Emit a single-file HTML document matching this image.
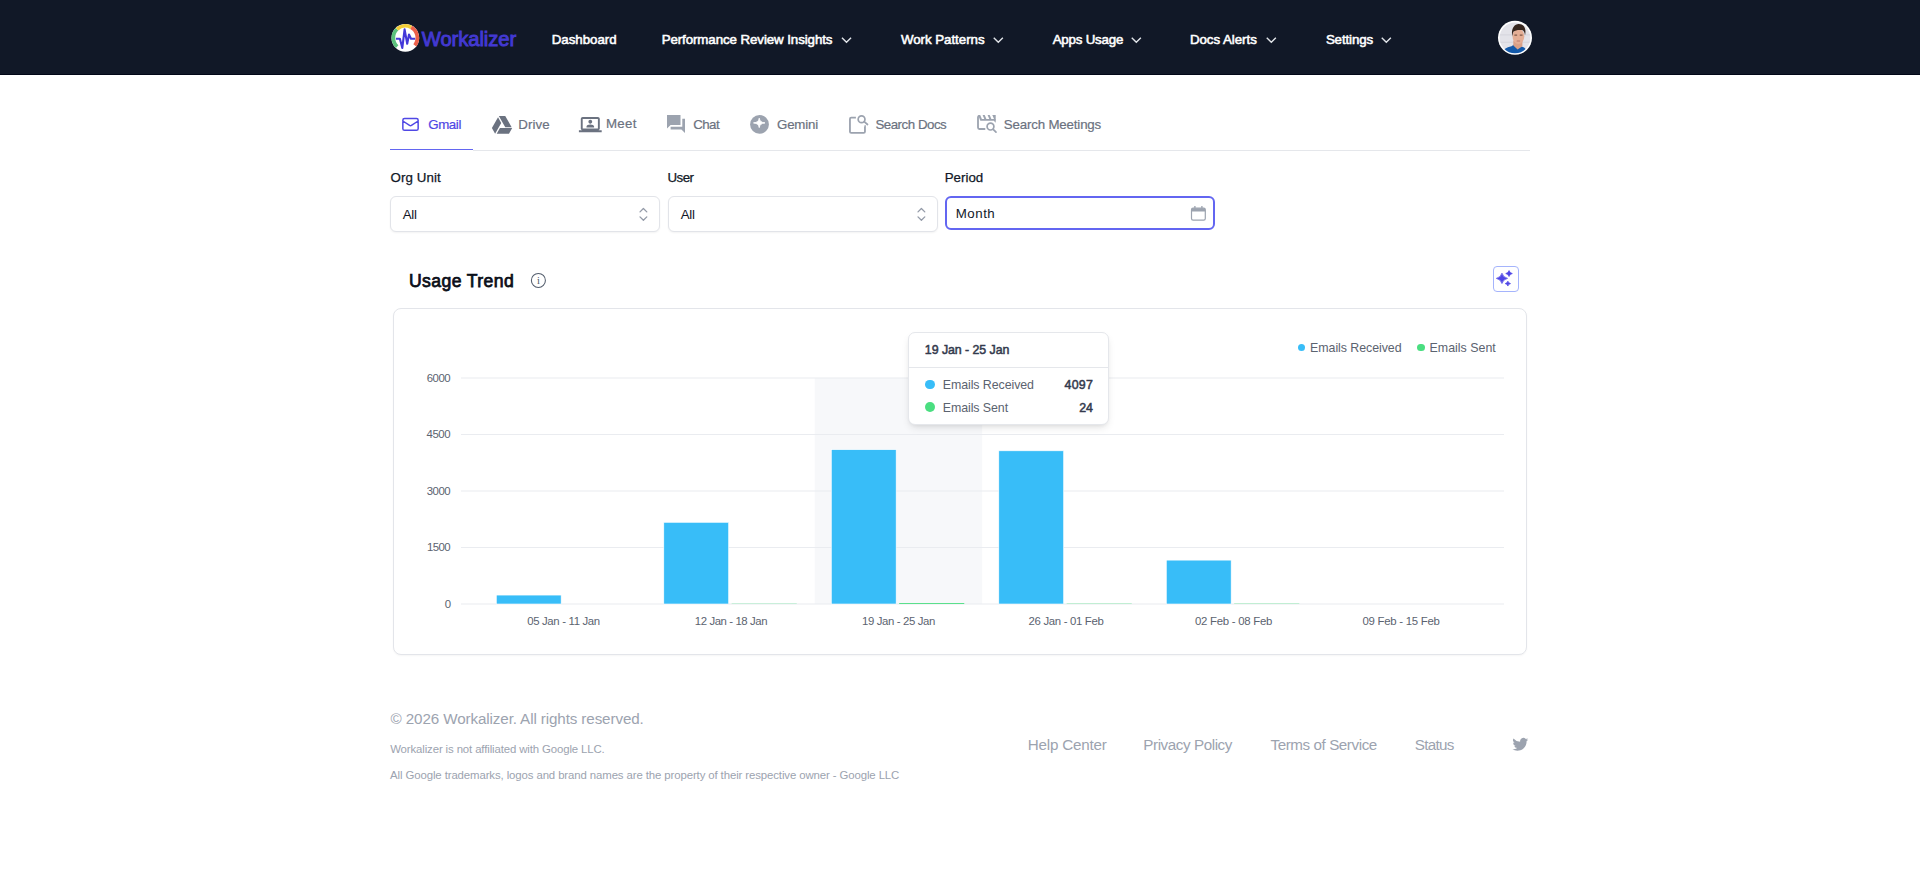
<!DOCTYPE html>
<html lang="en">
<head>
<meta charset="utf-8">
<title>Workalizer - Apps Usage - Gmail</title>
<style>
html,body{margin:0;padding:0;background:#fff;}
body{width:1920px;height:869px;position:relative;overflow:hidden;font-family:"Liberation Sans", sans-serif;}
.b{position:absolute;display:block;}
.t{position:absolute;display:block;white-space:nowrap;line-height:1;font-family:"Liberation Sans", sans-serif;}
</style>
</head>
<body>
<header><div class="b" style="left:0;top:0;width:1920px;height:74px;background:#111827;border-bottom:1px solid #020617"></div>
<svg class="b" style="left:390px;top:22px;" width="32" height="32" viewBox="0 0 32 32"><g transform="matrix(1.00000 0 0 1.00000 -390.0000 -22.0000)"><circle cx="405.35" cy="37.9" r="13.85" fill="#fff"/><path d="M397.17 46.68A12.0 12.0 0 0 1 397.01 29.27" fill="none" stroke="#5bc27c" stroke-width="3.7"/><path d="M397.01 29.27A12.0 12.0 0 0 1 411.17 27.40" fill="none" stroke="#f4cd37" stroke-width="3.7"/><path d="M411.17 27.40A12.0 12.0 0 0 1 414.81 45.29" fill="none" stroke="#ec614a" stroke-width="3.7"/><path d="M395.9 38.7H399.9L402.3 48.0L404.6 29.4L407.2 43.8L409.0 34.5L411.0 38.7H415.2" fill="none" stroke="#4338d8" stroke-width="2.1" stroke-linejoin="round" stroke-linecap="butt"/></g></svg>
<span class="t " style="left:421.75px;top:29.00px;font-size:20.2px;color:#4339d2;font-weight:400;letter-spacing:-0.061px;-webkit-text-stroke:0.9px #4339d2;">Workalizer</span>
<span class="t " style="left:551.67px;top:33.00px;font-size:13.3px;color:#ffffff;font-weight:400;letter-spacing:-0.013px;-webkit-text-stroke:0.55px #ffffff;">Dashboard</span>
<span class="t " style="left:661.67px;top:33.00px;font-size:13.3px;color:#ffffff;font-weight:400;letter-spacing:-0.082px;-webkit-text-stroke:0.55px #ffffff;">Performance Review Insights</span>
<svg class="b" style="left:840px;top:34px;" width="14" height="12" viewBox="0 0 14 12"><g transform="matrix(1.00000 0 0 1.00000 -840.0000 -34.0000)"><path d="M842.45 38.3L846.50 42.3L850.55 38.3" fill="none" stroke="#e2e5ea" stroke-width="1.4" stroke-linecap="square" stroke-linejoin="miter"/></g></svg>
<span class="t " style="left:900.88px;top:33.00px;font-size:13.3px;color:#ffffff;font-weight:400;letter-spacing:-0.025px;-webkit-text-stroke:0.55px #ffffff;">Work Patterns</span>
<svg class="b" style="left:991px;top:34px;" width="14" height="12" viewBox="0 0 14 12"><g transform="matrix(1.00000 0 0 1.00000 -991.0000 -34.0000)"><path d="M994.25 38.3L998.30 42.3L1002.35 38.3" fill="none" stroke="#e2e5ea" stroke-width="1.4" stroke-linecap="square" stroke-linejoin="miter"/></g></svg>
<span class="t " style="left:1052.68px;top:33.00px;font-size:13.3px;color:#ffffff;font-weight:400;letter-spacing:-0.199px;-webkit-text-stroke:0.55px #ffffff;">Apps Usage</span>
<svg class="b" style="left:1129px;top:34px;" width="14" height="12" viewBox="0 0 14 12"><g transform="matrix(1.00000 0 0 1.00000 -1129.0000 -34.0000)"><path d="M1132.25 38.3L1136.30 42.3L1140.35 38.3" fill="none" stroke="#e2e5ea" stroke-width="1.4" stroke-linecap="square" stroke-linejoin="miter"/></g></svg>
<span class="t " style="left:1189.88px;top:33.00px;font-size:13.3px;color:#ffffff;font-weight:400;letter-spacing:-0.028px;-webkit-text-stroke:0.55px #ffffff;">Docs Alerts</span>
<svg class="b" style="left:1264px;top:34px;" width="14" height="12" viewBox="0 0 14 12"><g transform="matrix(1.00000 0 0 1.00000 -1264.0000 -34.0000)"><path d="M1267.25 38.3L1271.30 42.3L1275.35 38.3" fill="none" stroke="#e2e5ea" stroke-width="1.4" stroke-linecap="square" stroke-linejoin="miter"/></g></svg>
<span class="t " style="left:1325.88px;top:33.00px;font-size:13.3px;color:#ffffff;font-weight:400;letter-spacing:-0.121px;-webkit-text-stroke:0.55px #ffffff;">Settings</span>
<svg class="b" style="left:1379px;top:34px;" width="14" height="12" viewBox="0 0 14 12"><g transform="matrix(1.00000 0 0 1.00000 -1379.0000 -34.0000)"><path d="M1382.25 38.3L1386.30 42.3L1390.35 38.3" fill="none" stroke="#e2e5ea" stroke-width="1.4" stroke-linecap="square" stroke-linejoin="miter"/></g></svg>
<svg class="b" style="left:1497px;top:20px;" width="36" height="36" viewBox="0 0 36 36"><g transform="matrix(1.00000 0 0 1.00000 -1497.0000 -20.0000)"><defs><clipPath id="avc"><circle cx="1515" cy="37.8" r="15.4"/></clipPath></defs><circle cx="1515" cy="37.8" r="17" fill="#fff"/><g clip-path="url(#avc)"><rect x="1497" y="20" width="36" height="36" fill="#e3e3e9"/><rect x="1497" y="34.5" width="36" height="0.8" fill="#d2d2da"/><rect x="1497" y="41.8" width="36" height="0.8" fill="#d2d2da"/><path d="M1501.5 55C1502.5 49.5 1506 47.3 1511.5 46.2L1514 44.6L1521.5 46.4C1525 47.2 1527 49.6 1527.6 55Z" fill="#1359a9"/><path d="M1513.3 40.5H1522.4V46.2L1517.6 49.4L1513.3 45.4Z" fill="#d9a087"/><ellipse cx="1518.4" cy="36.3" rx="5.9" ry="7.6" fill="#e4ae95"/><path d="M1512.3 36.2C1510.9 29.5 1513.6 24.4 1518.6 24.0C1524 23.8 1526.6 28.6 1525.0 35.6C1524.7 32.2 1523.8 30.3 1521.8 30.0C1518.8 29.7 1515.0 30.0 1513.6 31.6C1512.9 32.8 1512.6 34.6 1512.3 36.2Z" fill="#37271f"/><rect x="1514.2" y="34.4" width="3.1" height="1.3" rx=".6" fill="#7d5848"/><rect x="1519.6" y="34.4" width="3.1" height="1.3" rx=".6" fill="#7d5848"/><rect x="1516.6" y="40.4" width="3.6" height="1" rx=".5" fill="#bb796c"/></g></g></svg>
</header><main><nav>
<div class="b" style="left:473.00px;top:150.00px;width:1057.00px;height:1.00px;background:#e5e7eb"></div>
<div class="b" style="left:390.00px;top:149.00px;width:83.00px;height:1.00px;background:#6366f1"></div>
<svg class="b" style="left:400px;top:114px;" width="21" height="21" viewBox="0 0 21 21"><g transform="matrix(0.85000 0 0 0.85000 0.3000 0.2000)"><path d="M3 8l7.89 5.26a2 2 0 002.22 0L21 8M5 19h14a2 2 0 002-2V7a2 2 0 00-2-2H5a2 2 0 00-2 2v10a2 2 0 002 2z" fill="none" stroke="#5048e5" stroke-width="1.75" stroke-linecap="round" stroke-linejoin="round"/></g></svg>
<span class="t " style="left:428.20px;top:118.00px;font-size:13.3px;color:#4f46e5;font-weight:400;letter-spacing:-0.392px;-webkit-text-stroke:0.2px #4f46e5;">Gmail</span>
<svg class="b" style="left:491px;top:115px;" width="22" height="19" viewBox="0 0 22 19"><g transform="matrix(0.93548 0 0 0.93684 -0.1758 -0.9737)"><path fill="#6b7280" d="M7.71,3.5L1.15,15L4.58,21L11.13,9.5M9.73,15L6.3,21H19.42L22.85,15M22.28,14L15.42,2H8.58L8.57,2L15.43,14H22.28Z"/></g></svg>
<span class="t " style="left:518.30px;top:118.00px;font-size:13.3px;color:#6b7280;font-weight:400;letter-spacing:0.067px;-webkit-text-stroke:0.2px #6b7280;">Drive</span>
<svg class="b" style="left:578px;top:117px;" width="24" height="16" viewBox="0 0 24 16"><g transform="matrix(0.95000 0 0 0.95000 0.9000 -3.8000)"><path fill="#6b7280" fill-rule="evenodd" d="M20 4C21.1 4 22 4.89 22 6V16C22 17.11 21.11 18 20 18H24V20H0V18H4C2.9 18 2 17.11 2 16V6C2 4.89 2.89 4 4 4H20M20 6H4V16H20V6M12 12C14.21 12 16 12.9 16 14V15H8V14C8 12.9 9.79 12 12 12M12 7C13.11 7 14 7.9 14 9S13.11 11 12 11 10 10.11 10 9 10.9 7 12 7Z"/></g></svg>
<span class="t " style="left:605.90px;top:117.00px;font-size:13.3px;color:#6b7280;font-weight:400;letter-spacing:0.311px;-webkit-text-stroke:0.2px #6b7280;">Meet</span>
<svg class="b" style="left:667px;top:115px;" width="18" height="18" viewBox="0 0 18 18"><g transform="matrix(0.90000 0 0 0.89500 -1.8000 -1.6900)"><path fill="#9ca3af" d="M22 6h-3v9H6v3h12l4 4V6zm-5 7V2H2v15l4-4h11z"/></g></svg>
<span class="t " style="left:693.20px;top:118.00px;font-size:13.3px;color:#6b7280;font-weight:400;letter-spacing:-0.531px;-webkit-text-stroke:0.2px #6b7280;">Chat</span>
<svg class="b" style="left:748px;top:112px;" width="24" height="24" viewBox="0 0 24 24"><g transform="matrix(1.00000 0 0 1.00000 -748.0000 -112.0000)"><circle cx="759.5" cy="124.42" r="9.4" fill="#9ca3af"/><path fill="#fff" stroke="#fff" stroke-width="0.9" stroke-linejoin="round" d="M759.25 118.2C759.7 121.2 761.2 122.5 765.0 122.9C761.2 123.3 759.7 124.6 759.25 127.6C758.8 124.6 757.3 123.3 753.5 122.9C757.3 122.5 758.8 121.2 759.25 118.2Z"/></g></svg>
<span class="t " style="left:777.00px;top:118.00px;font-size:13.3px;color:#6b7280;font-weight:400;letter-spacing:-0.193px;-webkit-text-stroke:0.2px #6b7280;">Gemini</span>
<svg class="b" style="left:846px;top:112px;" width="26" height="24" viewBox="0 0 26 24"><g transform="matrix(1.00000 0 0 1.00000 -846.0000 -112.0000)"><g fill="none" stroke="#9ca3af" stroke-width="1.8" stroke-linecap="butt" stroke-linejoin="round"><path d="M855.9 117.7H851.2Q849.95 117.7 849.95 118.95V131.65Q849.95 132.9 851.2 132.9H863.7Q864.95 132.9 864.95 131.65V126.2"/></g><path d="M864.05 125.3L865.85 127.1V125.3Z" fill="#9ca3af"/><g fill="none" stroke="#9ca3af" stroke-width="1.7" stroke-linecap="round"><circle cx="861.56" cy="119.18" r="3.4"/><path d="M864.2 121.7L867.5 124.5"/></g></g></svg>
<span class="t " style="left:875.40px;top:118.00px;font-size:13.3px;color:#6b7280;font-weight:400;letter-spacing:-0.477px;-webkit-text-stroke:0.2px #6b7280;">Search Docs</span>
<svg class="b" style="left:974px;top:112px;" width="26" height="24" viewBox="0 0 26 24"><g transform="matrix(1.00000 0 0 1.00000 -974.0000 -112.0000)"><g fill="none" stroke="#9ca3af" stroke-width="1.8" stroke-linecap="round" stroke-linejoin="round"><path d="M984.6 129.0H979.4Q978.0 129.0 978.0 127.6V117.2Q978.0 116.0 979.0 115.9"/><path d="M980.8 119.8H994.8"/></g><g fill="#9ca3af"><path d="M978.2 115.1H980.2L982.3 119.9H980.0Z"/><path d="M982.6 115.1H984.7L986.8 119.9H984.7Z"/><path d="M987.6 115.1H989.7L991.8 119.9H989.7Z"/><path d="M992.3 115.1H995.7V122.8L994.0 121.0V119.0Z"/></g><g fill="none" stroke="#9ca3af" stroke-width="1.7" stroke-linecap="round"><circle cx="990.5" cy="126.6" r="3.4"/><path d="M993.2 129.3L996.0 132.1"/></g></g></svg>
<span class="t " style="left:1003.80px;top:118.00px;font-size:13.3px;color:#6b7280;font-weight:400;letter-spacing:-0.166px;-webkit-text-stroke:0.2px #6b7280;">Search Meetings</span>
</nav><section>
<span class="t " style="left:390.52px;top:171.00px;font-size:13.3px;color:#111827;font-weight:400;letter-spacing:0.091px;-webkit-text-stroke:0.25px #111827;">Org Unit</span>
<span class="t " style="left:667.52px;top:171.00px;font-size:13.3px;color:#111827;font-weight:400;letter-spacing:-0.532px;-webkit-text-stroke:0.25px #111827;">User</span>
<span class="t " style="left:944.73px;top:171.00px;font-size:13.3px;color:#111827;font-weight:400;letter-spacing:0.022px;-webkit-text-stroke:0.25px #111827;">Period</span>
<div class="b" style="left:390.00px;top:196.00px;width:270.00px;height:36.00px;border:1px solid #e2e4e9;border-radius:6px;background:#fff;box-shadow:0 1px 2px rgba(0,0,0,.05);box-sizing:border-box"></div>
<div class="b" style="left:668.00px;top:196.00px;width:270.00px;height:36.00px;border:1px solid #e2e4e9;border-radius:6px;background:#fff;box-shadow:0 1px 2px rgba(0,0,0,.05);box-sizing:border-box"></div>
<span class="t " style="left:402.70px;top:208.00px;font-size:13.3px;color:#111827;font-weight:400;letter-spacing:-0.312px;">All</span>
<span class="t " style="left:680.70px;top:208.00px;font-size:13.3px;color:#111827;font-weight:400;letter-spacing:-0.312px;">All</span>
<svg class="b" style="left:636px;top:204px;" width="16" height="20" viewBox="0 0 16 20"><g transform="matrix(1.00000 0 0 1.00000 -636.0000 -204.0000)"><g fill="none" stroke="#949ba8" stroke-width="1.3" stroke-linecap="round" stroke-linejoin="round"><path d="M640.0 211.9L643.4 208.5L646.8 211.9"/><path d="M640.0 216.9L643.4 220.3L646.8 216.9"/></g></g></svg>
<svg class="b" style="left:914px;top:204px;" width="16" height="20" viewBox="0 0 16 20"><g transform="matrix(1.00000 0 0 1.00000 -914.0000 -204.0000)"><g fill="none" stroke="#949ba8" stroke-width="1.3" stroke-linecap="round" stroke-linejoin="round"><path d="M918.0 211.9L921.4 208.5L924.8 211.9"/><path d="M918.0 216.9L921.4 220.3L924.8 216.9"/></g></g></svg>
<div class="b" style="left:945.00px;top:196.00px;width:270.00px;height:34.00px;border:2px solid #6366f1;border-radius:6px;background:#fff;box-sizing:border-box"></div>
<span class="t " style="left:955.75px;top:207.00px;font-size:13.3px;color:#111827;font-weight:400;letter-spacing:0.510px;">Month</span>
<svg class="b" style="left:1190px;top:205px;" width="16" height="16" viewBox="0 0 16 16"><g transform="matrix(1.00000 0 0 1.00000 0.9000 0.6000)"><path d="M4 0.3V3M11 0.3V3" stroke="#9ca3af" stroke-width="1.3" fill="none"/><rect x="0.6" y="2.6" width="13.8" height="12" rx="1.6" fill="none" stroke="#9ca3af" stroke-width="1.2"/><path d="M0.6 4.2A1.6 1.6 0 0 1 2.2 2.6H12.8A1.6 1.6 0 0 1 14.4 4.2V5.8H0.6Z" fill="#9ca3af"/></g></svg>
</section><section>
<span class="t " style="left:408.98px;top:273.00px;font-size:17.6px;color:#0b0f19;font-weight:400;letter-spacing:0.398px;-webkit-text-stroke:0.75px #0b0f19;">Usage Trend</span>
<svg class="b" style="left:530px;top:272px;" width="17" height="17" viewBox="0 0 17 17"><g transform="matrix(1.00000 0 0 1.00000 0.4000 0.4000)"><circle cx="8" cy="8" r="7" fill="none" stroke="#525c6b" stroke-width="1.05"/><text x="8" y="11.6" text-anchor="middle" font-family="Liberation Serif, serif" font-size="10.5" fill="#4b5563">i</text></g></svg>
<div class="b" style="left:1493.00px;top:266.00px;width:26.00px;height:26.00px;border:1px solid #a5b4fc;border-radius:4px;background:#fff;box-sizing:border-box"></div>
<svg class="b" style="left:1493px;top:266px;" width="26" height="26" viewBox="0 0 26 26"><g transform="matrix(1.00000 0 0 1.00000 -1493.0000 -266.0000)"><path fill="#4f46e5" stroke="#4f46e5" stroke-width="0.7" stroke-linejoin="round" d="M1501.96 273.16Q1503.08 277.32 1507.56 278.36Q1503.08 279.40 1501.96 283.56Q1500.84 279.40 1496.3600000000001 278.36Q1500.84 277.32 1501.96 273.16ZM1509.04 270.55Q1509.70 272.95 1512.34 273.55Q1509.70 274.15 1509.04 276.55Q1508.38 274.15 1505.74 273.55Q1508.38 272.95 1509.04 270.55ZM1507.86 281.15000000000003Q1508.40 283.11 1510.56 283.6Q1508.40 284.09 1507.86 286.05Q1507.32 284.09 1505.1599999999999 283.6Q1507.32 283.11 1507.86 281.15000000000003Z"/></g></svg>
<div class="b" style="left:393.00px;top:308.00px;width:1134.00px;height:347.00px;border:1px solid #e3e5ea;border-radius:8px;background:#fff;box-sizing:border-box;box-shadow:0 1px 2px rgba(0,0,0,.04)"></div>
<svg class="b" style="left:394px;top:309px;" width="1132" height="345" viewBox="0 0 1132 345"><g transform="matrix(1.00000 0 0 1.00000 -394.0000 -309.0000)"><rect x="814.7" y="378.0" width="167.5" height="226.0" fill="#f7f8fa"/><rect x="461.0" y="377.5" width="1043.0" height="1" fill="#eaecf0"/><rect x="461.0" y="434.0" width="1043.0" height="1" fill="#eaecf0"/><rect x="461.0" y="490.5" width="1043.0" height="1" fill="#eaecf0"/><rect x="461.0" y="547.0" width="1043.0" height="1" fill="#eaecf0"/><rect x="461.0" y="603.5" width="1043.0" height="1" fill="#eaecf0"/><rect x="496.30" y="595.07" width="64.85" height="8.93" fill="#38bdf8" stroke="#fff" stroke-width="0.6"/><rect x="663.80" y="522.30" width="64.85" height="81.70" fill="#38bdf8" stroke="#fff" stroke-width="0.6"/><rect x="731.65" y="603.75" width="65.1" height="0.25" fill="#4ade80"/><rect x="831.30" y="449.68" width="64.85" height="154.32" fill="#38bdf8" stroke="#fff" stroke-width="0.6"/><rect x="899.15" y="603.10" width="65.1" height="0.90" fill="#4ade80"/><rect x="998.80" y="450.81" width="64.85" height="153.19" fill="#38bdf8" stroke="#fff" stroke-width="0.6"/><rect x="1066.65" y="603.70" width="65.1" height="0.30" fill="#4ade80"/><rect x="1166.30" y="560.12" width="64.85" height="43.88" fill="#38bdf8" stroke="#fff" stroke-width="0.6"/><rect x="1234.15" y="603.70" width="65.1" height="0.30" fill="#4ade80"/></g></svg>
<span class="t " style="left:426.80px;top:373.00px;font-size:11.4px;color:#5b6370;font-weight:400;letter-spacing:-0.535px;">6000</span>
<span class="t " style="left:426.60px;top:429.00px;font-size:11.4px;color:#5b6370;font-weight:400;letter-spacing:-0.468px;">4500</span>
<span class="t " style="left:426.80px;top:486.00px;font-size:11.4px;color:#5b6370;font-weight:400;letter-spacing:-0.535px;">3000</span>
<span class="t " style="left:427.00px;top:542.00px;font-size:11.4px;color:#5b6370;font-weight:400;letter-spacing:-0.602px;">1500</span>
<span class="t " style="left:444.80px;top:599.00px;font-size:11.4px;color:#5b6370;font-weight:400;">0</span>
<span class="t " style="left:527.15px;top:616.00px;font-size:11.4px;color:#5b6370;font-weight:400;letter-spacing:-0.331px;">05 Jan - 11 Jan</span>
<span class="t " style="left:694.80px;top:616.00px;font-size:11.4px;color:#5b6370;font-weight:400;letter-spacing:-0.413px;">12 Jan - 18 Jan</span>
<span class="t " style="left:862.10px;top:616.00px;font-size:11.4px;color:#5b6370;font-weight:400;letter-spacing:-0.385px;">19 Jan - 25 Jan</span>
<span class="t " style="left:1028.50px;top:616.00px;font-size:11.4px;color:#5b6370;font-weight:400;letter-spacing:-0.318px;">26 Jan - 01 Feb</span>
<span class="t " style="left:1195.00px;top:616.00px;font-size:11.4px;color:#5b6370;font-weight:400;letter-spacing:-0.265px;">02 Feb - 08 Feb</span>
<span class="t " style="left:1362.50px;top:616.00px;font-size:11.4px;color:#5b6370;font-weight:400;letter-spacing:-0.265px;">09 Feb - 15 Feb</span>
<div class="b" style="left:1297.60px;top:343.90px;width:7.60px;height:7.60px;background:#38bdf8;border-radius:50%"></div>
<span class="t " style="left:1310.10px;top:342.00px;font-size:12.4px;color:#5b6370;font-weight:400;letter-spacing:-0.056px;">Emails Received</span>
<div class="b" style="left:1417.00px;top:343.90px;width:7.60px;height:7.60px;background:#4ade80;border-radius:50%"></div>
<span class="t " style="left:1429.60px;top:342.00px;font-size:12.4px;color:#5b6370;font-weight:400;letter-spacing:0.003px;">Emails Sent</span>
<div class="b" style="left:908.00px;top:332.00px;width:201.00px;height:93.00px;border:1px solid #e5e7eb;border-radius:7px;background:#fff;box-sizing:border-box;box-shadow:0 4px 8px -2px rgba(0,0,0,.12),0 2px 4px -2px rgba(0,0,0,.08)"></div>
<div class="b" style="left:909.00px;top:367.00px;width:199.00px;height:1.00px;background:#e5e7eb"></div>
<span class="t " style="left:924.85px;top:344.00px;font-size:12.4px;color:#333a4d;font-weight:400;letter-spacing:-0.059px;-webkit-text-stroke:0.5px #333a4d;">19 Jan - 25 Jan</span>
<div class="b" style="left:925.00px;top:379.60px;width:9.80px;height:9.80px;background:#38bdf8;border-radius:50%"></div>
<div class="b" style="left:925.00px;top:402.20px;width:9.80px;height:9.80px;background:#4ade80;border-radius:50%"></div>
<span class="t " style="left:942.70px;top:379.00px;font-size:12.4px;color:#5b6370;font-weight:400;letter-spacing:-0.070px;">Emails Received</span>
<span class="t " style="left:942.70px;top:402.00px;font-size:12.4px;color:#5b6370;font-weight:400;letter-spacing:-0.067px;">Emails Sent</span>
<span class="t " style="left:1064.45px;top:379.00px;font-size:12.4px;color:#333a4d;font-weight:400;letter-spacing:0.309px;-webkit-text-stroke:0.5px #333a4d;">4097</span>
<span class="t " style="left:1079.35px;top:402.00px;font-size:12.4px;color:#333a4d;font-weight:400;letter-spacing:-0.191px;-webkit-text-stroke:0.5px #333a4d;">24</span>
</section></main><footer>
<span class="t " style="left:390.60px;top:711.00px;font-size:15.2px;color:#9ca3af;font-weight:400;letter-spacing:-0.111px;">© 2026 Workalizer. All rights reserved.</span>
<span class="t " style="left:390.20px;top:744.00px;font-size:11.4px;color:#9ca3af;font-weight:400;letter-spacing:-0.121px;">Workalizer is not affiliated with Google LLC.</span>
<span class="t " style="left:390.10px;top:770.00px;font-size:11.4px;color:#9ca3af;font-weight:400;letter-spacing:-0.107px;">All Google trademarks, logos and brand names are the property of their respective owner - Google LLC</span>
<span class="t " style="left:1027.80px;top:737.00px;font-size:15.2px;color:#9ca3af;font-weight:400;letter-spacing:-0.208px;">Help Center</span>
<span class="t " style="left:1143.30px;top:737.00px;font-size:15.2px;color:#9ca3af;font-weight:400;letter-spacing:-0.418px;">Privacy Policy</span>
<span class="t " style="left:1270.50px;top:737.00px;font-size:15.2px;color:#9ca3af;font-weight:400;letter-spacing:-0.423px;">Terms of Service</span>
<span class="t " style="left:1414.80px;top:737.00px;font-size:15.2px;color:#9ca3af;font-weight:400;letter-spacing:-0.712px;">Status</span>
<svg class="b" style="left:1512px;top:737px;" width="17" height="14" viewBox="0 0 17 14"><g transform="matrix(0.79000 0 0 0.78806 -1.1800 -2.2582)"><path fill="#9ca3af" d="M8.29 20.251c7.547 0 11.675-6.253 11.675-11.675 0-.178 0-.355-.012-.53A8.348 8.348 0 0022 5.92a8.19 8.19 0 01-2.357.646 4.118 4.118 0 001.804-2.27 8.224 8.224 0 01-2.605.996 4.107 4.107 0 00-6.993 3.743 11.65 11.65 0 01-8.457-4.287 4.106 4.106 0 001.27 5.477A4.072 4.072 0 012.8 9.713v.052a4.105 4.105 0 003.292 4.022 4.095 4.095 0 01-1.853.07 4.108 4.108 0 003.834 2.85A8.233 8.233 0 012 18.407a11.616 11.616 0 006.29 1.84"/></g></svg>
</footer>
</body>
</html>
